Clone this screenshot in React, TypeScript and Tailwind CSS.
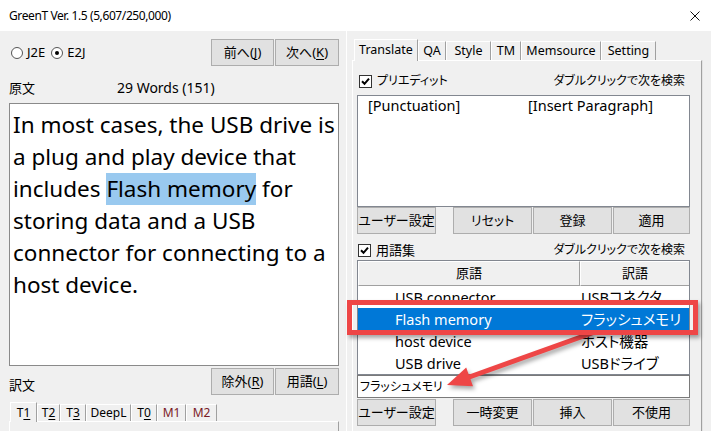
import React from "react";

function Btn({ children, className = "" }: { children: React.ReactNode; className?: string }) {
  return (
    <div
      className={`flex items-center justify-center bg-[#e1e1e1] border border-[#adadad] text-[13px] leading-none text-black ${className}`}
    >
      {children}
    </div>
  );
}

function U({ children }: { children: React.ReactNode }) {
  return <span className="underline underline-offset-[2px] decoration-1">{children}</span>;
}

function Radio({ checked = false }: { checked?: boolean }) {
  return (
    <div className="w-[12px] h-[12px] rounded-full border border-[#555] bg-white flex items-center justify-center">
      {checked && <div className="w-[4px] h-[4px] rounded-full bg-black" />}
    </div>
  );
}

function Check() {
  return (
    <div className="w-[13px] h-[13px] border border-[#333] bg-white flex items-center justify-center">
      <svg width="9" height="9" viewBox="0 0 9 9">
        <path d="M1 4.3 L3.5 6.8 L8 1.6" stroke="#000" strokeWidth="2" fill="none" />
      </svg>
    </div>
  );
}

export default function App() {
  return (
    <div className="w-[711px] h-[431px] overflow-hidden relative bg-[#f0f0f0] text-black font-['Noto_Sans','Noto_Sans_CJK_JP',sans-serif] [font-feature-settings:'palt']">
      {/* Title bar */}
      <div className="h-[31px] bg-white flex items-center pl-[9px] pr-[11px]">
        <span className="text-[12px] tracking-[-0.4px] leading-none">GreenT Ver. 1.5 (5,607/250,000)</span>
        <svg className="ml-auto" width="10" height="10" viewBox="0 0 10 10">
          <path d="M0.5 0.5 L9.5 9.5 M9.5 0.5 L0.5 9.5" stroke="#111" strokeWidth="1" />
        </svg>
      </div>

      <div className="flex h-[400px]">
        {/* Left column */}
        <div className="w-[346px] flex flex-col pl-[9px] pr-[7px]">
          <div className="mt-[8px] h-[27px] flex items-center">
            <div className="flex items-center ml-[2px] text-[13px] leading-none">
              <Radio />
              <span className="ml-[4px]">J2E</span>
              <div className="ml-[6px]">
                <Radio checked />
              </div>
              <span className="ml-[4px]">E2J</span>
            </div>
            <div className="ml-auto flex">
              <Btn className="w-[63px] h-[27px]">
                前へ(<U>J</U>)
              </Btn>
              <Btn className="w-[64px] h-[27px] ml-[1px]">
                次へ(<U>K</U>)
              </Btn>
            </div>
          </div>

          <div className="mt-[13px] h-[18px] flex items-center text-[14px] leading-none">
            <span className="w-[108px] text-[13px]">原文</span>
            <span>29 Words (151)</span>
          </div>

          <div className="mt-[6px] h-[263px] border border-[#8a8a8a] bg-white pl-[3px] pt-[5px] text-[22.5px] leading-[32px] whitespace-nowrap font-['Noto_Sans',sans-serif]">
            In most cases, the USB drive is
            <br />
            a plug and play device that
            <br />
            includes{" "}
            <span className="inline-block bg-[#99c9ef] leading-[32px]">Flash memory</span> for
            <br />
            storing data and a USB
            <br />
            connector for connecting to a
            <br />
            host device.
          </div>

          <div className="mt-[2px] h-[27px] flex">
            <span className="mt-[8px] text-[13px] leading-[18px]">訳文</span>
            <div className="ml-auto flex">
              <Btn className="w-[63px] h-[27px]">
                除外(<U>R</U>)
              </Btn>
              <Btn className="w-[64px] h-[27px] ml-[1px]">
                用語(<U>L</U>)
              </Btn>
            </div>
          </div>

          <div className="mt-[6px] h-[20px] flex items-end pl-[1px] text-[12px] leading-none">
            <div className="w-[27px] h-[20px] -mb-px z-10 bg-[#f0f0f0] border-t border-l border-white border-r border-r-[#a0a0a0] flex items-center justify-center">
              T<U>1</U>
            </div>
            <div className="w-[23px] h-[17px] border-t border-l border-white border-r border-r-[#a0a0a0] flex items-center justify-center">
              T<U>2</U>
            </div>
            <div className="w-[26px] h-[17px] border-t border-l border-white border-r border-r-[#a0a0a0] flex items-center justify-center">
              T<U>3</U>
            </div>
            <div className="w-[45px] h-[17px] border-t border-l border-white border-r border-r-[#a0a0a0] flex items-center justify-center">
              DeepL
            </div>
            <div className="w-[26px] h-[17px] border-t border-l border-white border-r border-r-[#a0a0a0] flex items-center justify-center">
              T<U>0</U>
            </div>
            <div className="w-[29px] h-[17px] border-t border-l border-white border-r border-r-[#a0a0a0] flex items-center justify-center text-[#7a1a24]">
              M1
            </div>
            <div className="w-[31px] h-[17px] border-t border-l border-white border-r border-r-[#a0a0a0] flex items-center justify-center text-[#7a1a24]">
              M2
            </div>
          </div>
          <div className="flex-1 border-t border-l border-white border-r border-r-[#a0a0a0]" />
        </div>

        {/* Right column */}
        <div className="flex-1 flex flex-col pl-[5px] pr-[9px] border-l border-white">
          <div className="mt-[7px] h-[22px] flex items-end pl-[2px] text-[12.5px] leading-none">
            <div className="w-[64px] h-[22px] -mb-px z-10 bg-[#f0f0f0] border-t border-l border-white border-r border-r-[#a0a0a0] flex items-start pt-[4px] justify-center">
              Translate
            </div>
            <div className="w-[28px] h-[19px] border-t border-l border-white border-r border-r-[#a0a0a0] flex items-center justify-center">
              QA
            </div>
            <div className="w-[45px] h-[19px] border-t border-l border-white border-r border-r-[#a0a0a0] flex items-center justify-center">
              Style
            </div>
            <div className="w-[30px] h-[19px] border-t border-l border-white border-r border-r-[#a0a0a0] flex items-center justify-center">
              TM
            </div>
            <div className="w-[80px] h-[19px] border-t border-l border-white border-r border-r-[#a0a0a0] flex items-center justify-center">
              Memsource
            </div>
            <div className="w-[55px] h-[19px] border-t border-l border-white border-r border-r-[#a0a0a0] flex items-center justify-center">
              Setting
            </div>
          </div>

          <div className="flex-1 flex flex-col border-t border-l border-white border-r border-r-[#a0a0a0] shadow-[1px_0_0_#e3e3e3] pl-[4px] pr-[11px]">
            <div className="mt-[11px] h-[18px] flex items-center text-[12px] leading-none">
              <div className="ml-[2px]">
                <Check />
              </div>
              <span className="ml-[5px]">プリエディット</span>
              <span className="ml-auto mr-[5px]">ダブルクリックで次を検索</span>
            </div>

            <div className="mt-[5px] h-[112px] border border-[#828790] bg-white flex pl-[10px] text-[14.5px] leading-[18px]">
              <span className="w-[160px]">[Punctuation]</span>
              <span>[Insert Paragraph]</span>
            </div>

            <div className="h-[27px] flex">
              <Btn className="w-[79px] h-[27px]">ユーザー設定</Btn>
              <Btn className="w-[79px] h-[27px] ml-[17px]">リセット</Btn>
              <Btn className="w-[79px] h-[27px] ml-[1px]">登録</Btn>
              <Btn className="flex-1 h-[27px] ml-[1px]">適用</Btn>
            </div>

            <div className="mt-[7px] h-[18px] flex items-center text-[12px] leading-none">
              <div className="ml-[1px]">
                <Check />
              </div>
              <span className="ml-[5px] text-[13px]">用語集</span>
              <span className="ml-auto mr-[5px]">ダブルクリックで次を検索</span>
            </div>

            <div className="mt-[1px] h-[115px] border border-[#828790] bg-white flex flex-col overflow-hidden">
              <div className="h-[25px] flex text-[13px] leading-none shrink-0">
                <div className="w-[222px] bg-[#f0f0f0] border-t border-l border-white border-r border-b border-r-[#a0a0a0] border-b-[#a0a0a0] flex items-center justify-center">
                  原語
                </div>
                <div className="flex-1 bg-[#f0f0f0] border-t border-l border-white border-b border-b-[#a0a0a0] flex items-center justify-center">
                  訳語
                </div>
              </div>
              <div className="text-[14.5px] leading-none">
                <div className="h-[22px] flex items-center">
                  <span className="w-[222px] pl-[37px]">USB connector</span>
                  <span className="pl-[1px]">USBコネクタ</span>
                </div>
                <div className="h-[22px] flex items-center bg-[#0078d7] text-white whitespace-nowrap overflow-hidden">
                  <span className="w-[222px] shrink-0 pl-[37px]">Flash memory</span>
                  <span className="pl-[1px]">フラッシュメモリ</span>
                </div>
                <div className="h-[22px] flex items-center">
                  <span className="w-[222px] pl-[37px]">host device</span>
                  <span className="pl-[1px]">ホスト機器</span>
                </div>
                <div className="h-[22px] flex items-center">
                  <span className="w-[222px] pl-[37px]">USB drive</span>
                  <span className="pl-[1px]">USBドライブ</span>
                </div>
              </div>
            </div>

            <div className="h-[23px] border border-[#7a7a7a] bg-white flex items-center pl-[2px] text-[12px] leading-none">
              フラッシュメモリ
            </div>

            <div className="mt-[1px] h-[27px] flex">
              <Btn className="w-[79px] h-[27px]">ユーザー設定</Btn>
              <Btn className="w-[79px] h-[27px] ml-[17px]">一時変更</Btn>
              <Btn className="w-[79px] h-[27px] ml-[1px]">挿入</Btn>
              <Btn className="flex-1 h-[27px] ml-[1px]">不使用</Btn>
            </div>
          </div>
        </div>
      </div>

      {/* Annotation overlays */}
      <svg
        className="absolute left-0 top-0 pointer-events-none drop-shadow-[2px_3px_2px_rgba(0,0,0,0.35)]"
        width="711"
        height="431"
        viewBox="0 0 711 431"
      >
        <line x1="592" y1="333" x2="468" y2="377.5" stroke="#ee4646" strokeWidth="5" />
        <polygon points="447,385 473,386.2 466.2,367.4" fill="#ee4646" />
      </svg>
      <div className="absolute left-[347px] top-[300px] w-[351px] h-[35px] border-[5px] border-[#ee4646] shadow-[2px_3px_4px_rgba(0,0,0,0.35)] pointer-events-none" />
    </div>
  );
}
